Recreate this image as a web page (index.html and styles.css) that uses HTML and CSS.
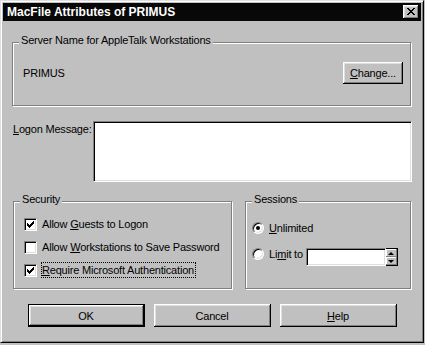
FILE: index.html
```html
<!DOCTYPE html>
<html lang="en">

<head>
    <meta charset="UTF-8">
    <title>MacFile Attributes of PRIMUS</title>
    <link rel="stylesheet" href="styles.css">
</head>

<body>
    <div class="window">
        <div class="titlebar">
            <span class="title">MacFile Attributes of PRIMUS</span>
            <span class="close-btn">
                <svg width="8" height="7" viewBox="0 0 8 7" shape-rendering="crispEdges">
                    <path d="M0 0h2v1h-2z M6 0h2v1h-2z M1 1h2v1h-2z M5 1h2v1h-2z M2 2h4v1h-4z M3 3h2v1h-2z M2 4h4v1h-4z M1 5h2v1h-2z M5 5h2v1h-2z M0 6h2v1h-2z M6 6h2v1h-2z" fill="#000" />
                </svg>
            </span>
        </div>

        <div class="dialog">
            <fieldset class="group server-group">
                <legend>Server Name for AppleTalk Workstations</legend>
                <div class="server-row">
                    <span class="server-name">PRIMUS</span>
                    <button class="btn btn-change"><u>C</u>hange...</button>
                </div>
            </fieldset>

            <div class="logon-row">
                <span class="logon-label"><u>L</u>ogon Message:</span>
                <div class="textbox"></div>
            </div>

            <div class="groups-row">
                <fieldset class="group security-group">
                    <legend>Security</legend>
                    <div class="check-row">
                        <span class="checkbox">
                            <svg width="7" height="7" viewBox="0 0 7 7" shape-rendering="crispEdges">
                                <path d="M6 0h1v1h-1z M5 1h2v1h-2z M0 2h1v1h-1z M4 2h3v1h-3z M0 3h2v1h-2z M3 3h3v1h-3z M0 4h5v1h-5z M1 5h3v1h-3z M2 6h1v1h-1z" fill="#000" />
                            </svg>
                        </span>
                        <span class="check-label">Allow <u>G</u>uests to Logon</span>
                    </div>
                    <div class="check-row">
                        <span class="checkbox"></span>
                        <span class="check-label">Allow <u>W</u>orkstations to Save Password</span>
                    </div>
                    <div class="check-row">
                        <span class="checkbox">
                            <svg width="7" height="7" viewBox="0 0 7 7" shape-rendering="crispEdges">
                                <path d="M6 0h1v1h-1z M5 1h2v1h-2z M0 2h1v1h-1z M4 2h3v1h-3z M0 3h2v1h-2z M3 3h3v1h-3z M0 4h5v1h-5z M1 5h3v1h-3z M2 6h1v1h-1z" fill="#000" />
                            </svg>
                        </span>
                        <span class="check-label focused"><u>R</u>equire Microsoft Authentication</span>
                    </div>
                </fieldset>

                <fieldset class="group sessions-group">
                    <legend>Sessions</legend>
                    <div class="radio-row">
                        <span class="radio selected"></span>
                        <span class="radio-label"><u>U</u>nlimited</span>
                    </div>
                    <div class="radio-row limit-row">
                        <span class="radio"></span>
                        <span class="radio-label">Li<u>m</u>it to</span>
                        <div class="spin">
                            <div class="spin-edit"></div>
                            <div class="spin-buttons">
                                <span class="spin-btn"><span class="arrow-up"></span></span>
                                <span class="spin-btn"><span class="arrow-down"></span></span>
                            </div>
                        </div>
                    </div>
                </fieldset>
            </div>

            <div class="button-row">
                <button class="btn btn-default">OK</button>
                <button class="btn">Cancel</button>
                <button class="btn"><u>H</u>elp</button>
            </div>
        </div>
    </div>
</body>

</html>
```

FILE: styles.css
```css
html {
    background: #c0c0c0;
}

body {
    margin: 0;
    font-family: "Liberation Sans", Arial, sans-serif;
    font-size: 11px;
    letter-spacing: -0.2px;
    color: #000;
}

.window {
    width: 424px;
    height: 343px;
    box-sizing: border-box;
    background: #c0c0c0;
    border: 1px solid;
    border-color: #dfdfdf #000 #000 #dfdfdf;
    box-shadow: inset 1px 1px #fff, inset -1px -1px #808080;
    padding: 2px;
}

.titlebar {
    height: 18px;
    background: #080808;
    display: flex;
    align-items: center;
    justify-content: space-between;
    padding: 0 2px 0 4px;
}

.title {
    color: #fff;
    font-weight: bold;
    font-size: 12px;
    letter-spacing: 0;
}

.close-btn {
    width: 16px;
    height: 14px;
    box-sizing: border-box;
    background: #c0c0c0;
    box-shadow: inset -1px -1px #000, inset 1px 1px #fff, inset -2px -2px #808080, inset 2px 2px #dfdfdf;
    display: flex;
    align-items: center;
    justify-content: center;
    padding: 0 1px 1px 0;
}

.close-btn svg {
    display: block;
}

.dialog {
    padding: 0 9px;
}

/* etched group boxes */
.group {
    margin: 0 1px 0 0;
    min-width: 0;
    border: 1px solid #808080;
    box-shadow: inset 1px 1px #fff, 1px 1px #fff;
    padding: 0 0 0 6px;
}

.group legend {
    padding: 0 2px 3px;
    line-height: 13px;
    background: #c0c0c0;
}

.server-group {
    margin-top: 13px;
    padding-right: 7px;
    padding-bottom: 21px;
}

.server-row {
    margin-top: 12px;
    display: flex;
    align-items: center;
    justify-content: space-between;
    padding-left: 4px;
}

.btn {
    width: 117px;
    height: 23px;
    box-sizing: border-box;
    padding: 0;
    border: none;
    background: #c0c0c0;
    box-shadow: inset -1px -1px #000, inset 1px 1px #fff, inset -2px -2px #808080, inset 2px 2px #dfdfdf;
    font: inherit;
    letter-spacing: inherit;
    color: #000;
}

.btn-change {
    width: 60px;
    height: 22px;
}

.btn-default {
    border: 1px solid #000;
}

.logon-row {
    margin-top: 15px;
    display: flex;
    align-items: flex-start;
}

.logon-label {
    width: 80px;
    padding-left: 1px;
    line-height: 13px;
    padding-top: 2px;
}

.textbox {
    flex: 1;
    height: 61px;
    box-sizing: border-box;
    background: #fff;
    border: 1px solid;
    border-color: #808080 #fff #fff #808080;
    box-shadow: inset 1px 1px #000, inset -1px -1px #dfdfdf;
}

.groups-row {
    margin-top: 11px;
    display: flex;
    gap: 12px;
}

.security-group {
    width: 219px;
    box-sizing: border-box;
    height: 96px;
    margin-left: 1px;
}

.sessions-group {
    flex: 1;
    height: 96px;
    box-sizing: border-box;
}

.check-row {
    display: flex;
    align-items: flex-start;
    height: 13px;
    margin-top: 10px;
    padding-left: 4px;
}

.check-row:first-of-type {
    margin-top: 9px;
}

.checkbox {
    width: 13px;
    height: 13px;
    box-sizing: border-box;
    background: #fff;
    border: 1px solid;
    border-color: #808080 #fff #fff #808080;
    box-shadow: inset 1px 1px #000, inset -1px -1px #dfdfdf;
    display: flex;
    align-items: center;
    justify-content: center;
    margin-right: 5px;
}

.checkbox svg {
    display: block;
}

.check-label {
    line-height: 13px;
    white-space: nowrap;
}

.focused {
    border: 1px dotted #000;
    margin: -2px 0 0 -1px;
    padding: 1px 1px 0 0;
}

.radio-row {
    display: flex;
    align-items: flex-start;
    margin-top: 13px;
}

.limit-row {
    margin-top: 14px;
}

.radio {
    width: 12px;
    height: 12px;
    box-sizing: border-box;
    border-radius: 50%;
    background: #fff;
    border: 1px solid;
    border-color: #808080 #fff #fff #808080;
    box-shadow: inset 1px 1px #000, inset -1px -1px #dfdfdf;
    display: flex;
    align-items: center;
    justify-content: center;
    margin-right: 5px;
}

.radio.selected::after {
    content: "";
    width: 4px;
    height: 4px;
    border-radius: 50%;
    background: #000;
}

.radio-label {
    line-height: 12px;
    white-space: nowrap;
}

.spin {
    display: flex;
    margin-left: 3px;
}

.spin-edit {
    width: 80px;
    height: 18px;
    box-sizing: border-box;
    background: #fff;
    border: 1px solid;
    border-color: #808080 #fff #fff #808080;
    box-shadow: inset 1px 1px #000, inset -1px -1px #dfdfdf;
}

.spin-buttons {
    display: flex;
    flex-direction: column;
    width: 12px;
    height: 18px;
    box-sizing: border-box;
    border: 1px solid #000;
    border-left: none;
}

.spin-btn {
    flex: 1;
    background: #c0c0c0;
    box-shadow: inset -1px -1px #808080, inset 1px 1px #fff;
    display: flex;
    align-items: center;
    justify-content: center;
}

.arrow-up {
    border-left: 3px solid transparent;
    border-right: 3px solid transparent;
    border-bottom: 3px solid #000;
}

.arrow-down {
    border-left: 3px solid transparent;
    border-right: 3px solid transparent;
    border-top: 3px solid #000;
}

.button-row {
    margin-top: 15px;
    display: flex;
    justify-content: center;
    gap: 9px;
}
```
